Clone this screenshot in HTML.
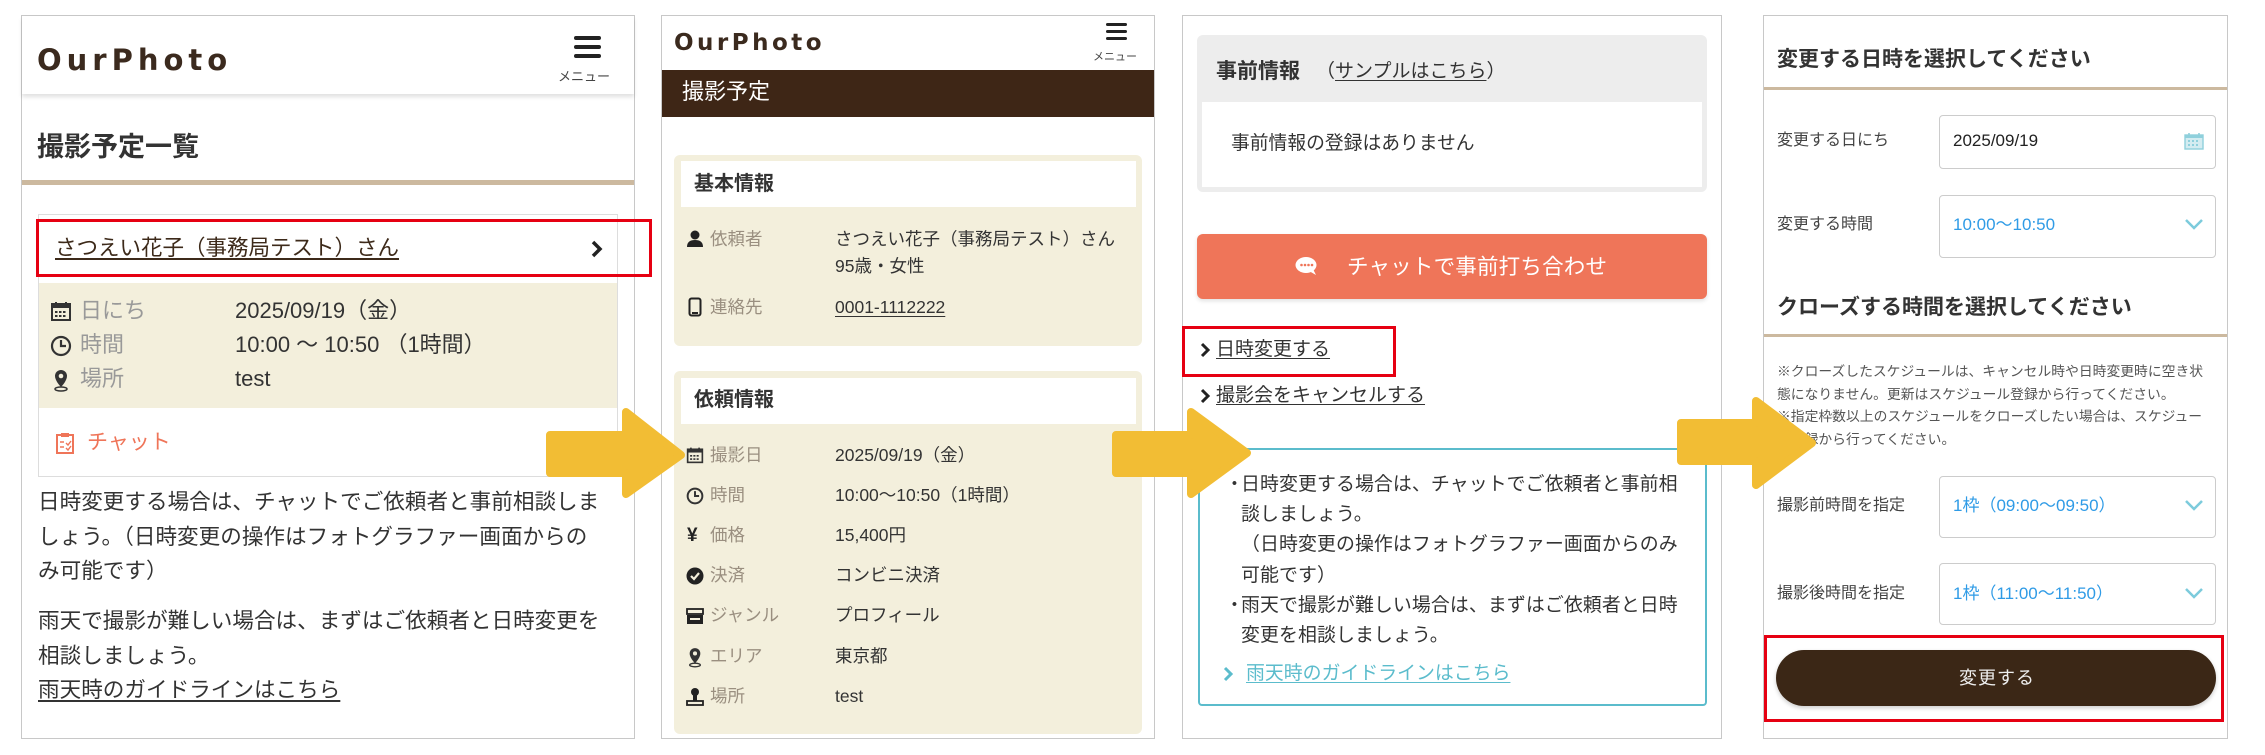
<!DOCTYPE html>
<html><head><meta charset="utf-8">
<style>
*{margin:0;padding:0;box-sizing:border-box}
body{width:2265px;height:755px;background:#fff;position:relative;overflow:hidden;font-family:"Liberation Sans","Noto Sans CJK JP",sans-serif;color:#333}
.a{position:absolute;white-space:nowrap}
.box{position:absolute}
.logo{font-family:"DejaVu Sans","Liberation Sans",sans-serif;font-weight:bold;color:#3b2a1e}
.u{text-decoration:underline;text-underline-offset:3px}
.bar{position:absolute;background:#222;border-radius:2px}
</style></head><body>

<!-- ===== Panel 1 ===== -->
<div class="box" style="left:21px;top:15px;width:614px;height:724px;border:1px solid #c8c8c8"></div>
<div class="box" style="left:22px;top:16px;width:612px;height:78px;background:#fff;box-shadow:0 3px 4px rgba(0,0,0,.12)"></div>
<div class="a logo" style="left:37px;top:42px;font-size:29px;line-height:36px;letter-spacing:5px">OurPhoto</div>
<div class="bar" style="left:574px;top:36px;width:27px;height:4px"></div>
<div class="bar" style="left:574px;top:45px;width:27px;height:4px"></div>
<div class="bar" style="left:574px;top:54px;width:27px;height:4px"></div>
<div class="a" style="left:558px;top:69px;font-size:13px;line-height:16px;color:#444">メニュー</div>
<div class="a" style="left:37px;top:131px;font-size:27px;line-height:32px;font-weight:bold;color:#333">撮影予定一覧</div>
<div class="box" style="left:22px;top:180px;width:612px;height:5px;background:#ccb99f"></div>
<div class="box" style="left:38px;top:214px;width:580px;height:263px;border:1px solid #ddd"></div>
<div class="a u" style="left:55px;top:233px;font-size:21.5px;line-height:30px;color:#3d2a1a">さつえい花子（事務局テスト）さん</div>
<svg class="a" style="left:590px;top:240px" width="14" height="18" viewBox="0 0 14 18"><path d="M3 2 L10 9 L3 16" stroke="#222" stroke-width="3.5" fill="none"/></svg>
<div class="box" style="left:36px;top:219px;width:616px;height:58px;border:3px solid #e60012"></div>
<div class="box" style="left:39px;top:283px;width:578px;height:125px;background:#f3efdc"></div>
<svg class="a" style="left:50px;top:300px" width="22" height="22" viewBox="0 0 22 22"><rect x="2" y="4" width="18" height="16" fill="none" stroke="#333" stroke-width="2"/><rect x="2" y="4" width="18" height="4" fill="#333"/><path d="M6 2v4M16 2v4" stroke="#333" stroke-width="2"/><g fill="#333"><rect x="5" y="11" width="2.5" height="2"/><rect x="9" y="11" width="2.5" height="2"/><rect x="13" y="11" width="2.5" height="2"/><rect x="5" y="15" width="2.5" height="2"/><rect x="9" y="15" width="2.5" height="2"/><rect x="13" y="15" width="2.5" height="2"/></g></svg>
<svg class="a" style="left:50px;top:335px" width="22" height="22" viewBox="0 0 22 22"><circle cx="11" cy="11" r="9" fill="none" stroke="#333" stroke-width="2.2"/><path d="M11 5v6h5" stroke="#333" stroke-width="2.2" fill="none"/></svg>
<svg class="a" style="left:52px;top:368px" width="18" height="24" viewBox="0 0 18 24"><path d="M9 2a6 6 0 0 0-6 6c0 5 6 11 6 11s6-6 6-11a6 6 0 0 0-6-6z" fill="#333"/><circle cx="9" cy="8" r="2.3" fill="#f3efdc"/><ellipse cx="9" cy="21" rx="6" ry="2" fill="none" stroke="#333" stroke-width="1.5"/></svg>
<div class="a" style="left:80px;top:296px;font-size:22px;line-height:30px;color:#999">日にち</div>
<div class="a" style="left:80px;top:330px;font-size:22px;line-height:30px;color:#999">時間</div>
<div class="a" style="left:80px;top:364px;font-size:22px;line-height:30px;color:#999">場所</div>
<div class="a" style="left:235px;top:296px;font-size:22px;line-height:30px;color:#333">2025/09/19（金）</div>
<div class="a" style="left:235px;top:330px;font-size:22px;line-height:30px;color:#333">10:00 〜 10:50 （1時間）</div>
<div class="a" style="left:235px;top:364px;font-size:22px;line-height:30px;color:#333">test</div>
<svg class="a" style="left:55px;top:432px" width="20" height="23" viewBox="0 0 20 23"><rect x="2" y="3" width="16" height="18" fill="none" stroke="#ef7559" stroke-width="2"/><rect x="6" y="1" width="8" height="4" fill="#ef7559"/><path d="M5 10h4M5 15h4M11 11l2 2 3-4M11 16l2 2 3-4" stroke="#ef7559" stroke-width="1.4" fill="none"/></svg>
<div class="a" style="left:87px;top:428px;font-size:21px;line-height:30px;color:#ef7559;letter-spacing:0px">チャット</div>
<div class="a" style="left:38px;top:485px;font-size:21.6px;line-height:34.5px;color:#333">日時変更する場合は、チャットでご依頼者と事前相談しま<br>しょう。（日時変更の操作はフォトグラファー画面からの<br>み可能です）</div>
<div class="a" style="left:38px;top:604px;font-size:21.6px;line-height:34.5px;color:#333">雨天で撮影が難しい場合は、まずはご依頼者と日時変更を<br>相談しましょう。<br><span class="u" style="color:#333">雨天時のガイドラインはこちら</span></div>

<!-- ===== Panel 2 ===== -->
<div class="box" style="left:661px;top:15px;width:494px;height:724px;border:1px solid #c8c8c8"></div>
<div class="a logo" style="left:674px;top:29px;font-size:23px;line-height:28px;letter-spacing:3.5px">OurPhoto</div>
<div class="bar" style="left:1106px;top:23px;width:21px;height:3px"></div>
<div class="bar" style="left:1106px;top:30px;width:21px;height:3px"></div>
<div class="bar" style="left:1106px;top:37px;width:21px;height:3px"></div>
<div class="a" style="left:1093px;top:50px;font-size:11px;line-height:14px;color:#444">メニュー</div>
<div class="box" style="left:662px;top:70px;width:492px;height:47px;background:#3e2616"></div>
<div class="a" style="left:682px;top:78px;font-size:22px;line-height:28px;color:#fff">撮影予定</div>

<div class="box" style="left:674px;top:155px;width:468px;height:191px;background:#f3efdc;border-radius:6px"></div>
<div class="box" style="left:681px;top:161px;width:455px;height:46px;background:#fff"></div>
<div class="a" style="left:694px;top:171px;font-size:20px;line-height:26px;font-weight:bold;color:#333">基本情報</div>
<div class="box" style="left:674px;top:371px;width:468px;height:363px;background:#f3efdc;border-radius:6px"></div>
<div class="box" style="left:681px;top:378px;width:455px;height:46px;background:#fff"></div>
<div class="a" style="left:694px;top:387px;font-size:20px;line-height:26px;font-weight:bold;color:#333">依頼情報</div>

<div style="position:absolute;left:0;top:0;font-size:17.5px;color:#9a8f80">
<div class="a" style="left:710px;top:226px;line-height:26px">依頼者</div>
<div class="a" style="left:710px;top:294px;line-height:26px">連絡先</div>
<div class="a" style="left:710px;top:442px;line-height:26px">撮影日</div>
<div class="a" style="left:710px;top:482px;line-height:26px">時間</div>
<div class="a" style="left:710px;top:522px;line-height:26px">価格</div>
<div class="a" style="left:710px;top:562px;line-height:26px">決済</div>
<div class="a" style="left:710px;top:602px;line-height:26px">ジャンル</div>
<div class="a" style="left:710px;top:643px;line-height:26px">エリア</div>
<div class="a" style="left:710px;top:683px;line-height:26px">場所</div>
</div>
<div style="position:absolute;left:0;top:0;font-size:17.5px;color:#333">
<div class="a" style="left:835px;top:226px;line-height:26px">さつえい花子（事務局テスト）さん</div>
<div class="a" style="left:835px;top:253px;line-height:26px">95歳・女性</div>
<div class="a u" style="left:835px;top:294px;line-height:26px">0001-1112222</div>
<div class="a" style="left:835px;top:442px;line-height:26px">2025/09/19（金）</div>
<div class="a" style="left:835px;top:482px;line-height:26px">10:00〜10:50（1時間）</div>
<div class="a" style="left:835px;top:522px;line-height:26px">15,400円</div>
<div class="a" style="left:835px;top:562px;line-height:26px">コンビニ決済</div>
<div class="a" style="left:835px;top:602px;line-height:26px">プロフィール</div>
<div class="a" style="left:835px;top:643px;line-height:26px">東京都</div>
<div class="a" style="left:835px;top:683px;line-height:26px">test</div>
</div>
<!-- icons panel 2 -->
<svg class="a" style="left:686px;top:230px" width="18" height="18" viewBox="0 0 18 18"><circle cx="9" cy="5" r="4.5" fill="#222"/><path d="M1 17c0-5 3-7 8-7s8 2 8 7z" fill="#222"/></svg>
<svg class="a" style="left:688px;top:297px" width="14" height="20" viewBox="0 0 14 20"><rect x="1.5" y="1.5" width="11" height="17" rx="2" fill="none" stroke="#222" stroke-width="2"/><rect x="4" y="15" width="6" height="2" fill="#222"/></svg>
<svg class="a" style="left:686px;top:446px" width="18" height="18" viewBox="0 0 22 22"><rect x="2" y="4" width="18" height="16" fill="none" stroke="#333" stroke-width="2"/><rect x="2" y="4" width="18" height="4" fill="#333"/><path d="M6 2v4M16 2v4" stroke="#333" stroke-width="2"/><g fill="#333"><rect x="5" y="11" width="2.5" height="2"/><rect x="9" y="11" width="2.5" height="2"/><rect x="13" y="11" width="2.5" height="2"/><rect x="5" y="15" width="2.5" height="2"/><rect x="9" y="15" width="2.5" height="2"/><rect x="13" y="15" width="2.5" height="2"/></g></svg>
<svg class="a" style="left:686px;top:487px" width="18" height="18" viewBox="0 0 22 22"><circle cx="11" cy="11" r="9" fill="none" stroke="#333" stroke-width="2.4"/><path d="M11 5v6h5" stroke="#333" stroke-width="2.4" fill="none"/></svg>
<div class="a" style="left:687px;top:523px;font-size:19px;line-height:26px;font-weight:bold;color:#222">¥</div>
<svg class="a" style="left:686px;top:567px" width="18" height="18" viewBox="0 0 18 18"><circle cx="9" cy="9" r="8.5" fill="#222"/><path d="M5 9l3 3 5-6" stroke="#f3efdc" stroke-width="2.2" fill="none"/></svg>
<svg class="a" style="left:686px;top:607px" width="18" height="18" viewBox="0 0 18 18"><rect x="1" y="2" width="16" height="5" fill="none" stroke="#222" stroke-width="1.8"/><rect x="1" y="8" width="16" height="9" fill="#222"/><rect x="4" y="11" width="10" height="2" fill="#f3efdc"/></svg>
<svg class="a" style="left:687px;top:646px" width="16" height="22" viewBox="0 0 18 24"><path d="M9 2a6 6 0 0 0-6 6c0 5 6 11 6 11s6-6 6-11a6 6 0 0 0-6-6z" fill="#333"/><circle cx="9" cy="8" r="2.3" fill="#f3efdc"/><ellipse cx="9" cy="21" rx="6" ry="2" fill="none" stroke="#333" stroke-width="1.5"/></svg>
<svg class="a" style="left:686px;top:687px" width="18" height="20" viewBox="0 0 18 20"><circle cx="9" cy="5" r="4" fill="#222"/><rect x="7" y="8" width="4" height="6" fill="#222"/><rect x="1" y="14" width="16" height="4" fill="none" stroke="#222" stroke-width="1.8"/></svg>

<!-- ===== Panel 3 ===== -->
<div class="box" style="left:1182px;top:15px;width:540px;height:724px;border:1px solid #c8c8c8"></div>
<div class="box" style="left:1197px;top:35px;width:510px;height:157px;background:#ededed;border-radius:6px"></div>
<div class="box" style="left:1202px;top:102px;width:500px;height:85px;background:#fff"></div>
<div class="a" style="left:1216px;top:58px;font-size:21px;line-height:28px;font-weight:bold;color:#333">事前情報</div>
<div class="a" style="left:1316px;top:58px;font-size:19px;line-height:28px;color:#333">（<span class="u">サンプルはこちら</span>）</div>
<div class="a" style="left:1231px;top:130px;font-size:18.8px;line-height:26px;color:#333">事前情報の登録はありません</div>
<div class="box" style="left:1197px;top:234px;width:510px;height:65px;background:#ef7559;border-radius:6px;box-shadow:0 2px 4px rgba(0,0,0,.12)"></div>
<svg class="a" style="left:1295px;top:256px" width="23" height="20" viewBox="0 0 23 20"><ellipse cx="11" cy="9" rx="10.5" ry="8" fill="#fff"/><path d="M14 15l7 4-3-6z" fill="#fff"/><g fill="#ef7559"><circle cx="6.5" cy="9" r="1.3"/><circle cx="10" cy="9" r="1.3"/><circle cx="13.5" cy="9" r="1.3"/><circle cx="17" cy="9" r="1.3"/></g></svg>
<div class="a" style="left:1347px;top:252px;font-size:21.5px;line-height:30px;color:#fff;letter-spacing:0.2px">チャットで事前打ち合わせ</div>
<svg class="a" style="left:1200px;top:342px" width="12" height="16" viewBox="0 0 12 16"><path d="M2 2l6 6-6 6" stroke="#222" stroke-width="3" fill="none"/></svg>
<div class="a u" style="left:1216px;top:337px;font-size:19px;line-height:26px;color:#333">日時変更する</div>
<div class="box" style="left:1182px;top:326px;width:214px;height:51px;border:3px solid #e60012"></div>
<svg class="a" style="left:1200px;top:388px" width="12" height="16" viewBox="0 0 12 16"><path d="M2 2l6 6-6 6" stroke="#222" stroke-width="3" fill="none"/></svg>
<div class="a u" style="left:1216px;top:383px;font-size:19px;line-height:26px;color:#333">撮影会をキャンセルする</div>
<div class="box" style="left:1198px;top:448px;width:509px;height:258px;border:2.5px solid #5bbccc;border-radius:4px"></div>
<div class="a" style="left:1225px;top:470px;font-size:18.9px;line-height:30.2px;color:#333">・</div>
<div class="a" style="left:1225px;top:591px;font-size:18.9px;line-height:30.2px;color:#333">・</div>
<div class="a" style="left:1241px;top:470px;font-size:18.9px;line-height:30.2px;color:#333;letter-spacing:0.1px">日時変更する場合は、チャットでご依頼者と事前相<br>談しましょう。<br>（日時変更の操作はフォトグラファー画面からのみ<br>可能です）<br>雨天で撮影が難しい場合は、まずはご依頼者と日時<br>変更を相談しましょう。</div>
<svg class="a" style="left:1223px;top:666px" width="12" height="16" viewBox="0 0 12 16"><path d="M2 2l6 6-6 6" stroke="#5bbccc" stroke-width="3" fill="none"/></svg>
<div class="a u" style="left:1246px;top:661px;font-size:18.9px;line-height:26px;color:#5bbccc">雨天時のガイドラインはこちら</div>

<!-- ===== Panel 4 ===== -->
<div class="box" style="left:1763px;top:15px;width:465px;height:724px;border:1px solid #c8c8c8"></div>
<div class="a" style="left:1777px;top:46px;font-size:21px;line-height:28px;font-weight:bold;color:#333">変更する日時を選択してください</div>
<div class="box" style="left:1764px;top:87px;width:463px;height:3px;background:#ccb99f"></div>
<div class="a" style="left:1777px;top:130px;font-size:16px;line-height:22px;color:#444">変更する日にち</div>
<div class="box" style="left:1939px;top:115px;width:277px;height:54px;border:1px solid #ccc;border-radius:4px"></div>
<div class="a" style="left:1953px;top:130px;font-size:17px;line-height:22px;color:#222">2025/09/19</div>
<svg class="a" style="left:2184px;top:132px" width="20" height="18" viewBox="0 0 20 18"><rect x="1" y="3" width="18" height="14" fill="#d4ecf1" stroke="#8fd0dc" stroke-width="1.4"/><rect x="1" y="3" width="18" height="3" fill="#8fd0dc"/><path d="M5 1v4M15 1v4" stroke="#8fd0dc" stroke-width="1.6"/><g fill="#8fd0dc"><rect x="4" y="8" width="2" height="2"/><rect x="8" y="8" width="2" height="2"/><rect x="12" y="8" width="2" height="2"/><rect x="4" y="12" width="2" height="2"/><rect x="8" y="12" width="2" height="2"/><rect x="12" y="12" width="2" height="2"/></g></svg>
<div class="a" style="left:1777px;top:214px;font-size:16px;line-height:22px;color:#444">変更する時間</div>
<div class="box" style="left:1939px;top:195px;width:277px;height:63px;border:1px solid #ccc;border-radius:4px"></div>
<div class="a" style="left:1953px;top:214px;font-size:17px;line-height:22px;color:#2f9be6">10:00〜10:50</div>
<svg class="a" style="left:2185px;top:219px" width="18" height="11" viewBox="0 0 18 11"><path d="M1 1l8 8 8-8" stroke="#7ccbdc" stroke-width="2.5" fill="none"/></svg>
<div class="a" style="left:1777px;top:294px;font-size:21px;line-height:28px;font-weight:bold;color:#333">クローズする時間を選択してください</div>
<div class="box" style="left:1764px;top:334px;width:463px;height:3px;background:#ccb99f"></div>
<div class="a" style="left:1777px;top:361px;font-size:13.8px;line-height:22.6px;color:#555">※クローズしたスケジュールは、キャンセル時や日時変更時に空き状<br>態になりません。更新はスケジュール登録から行ってください。<br>※指定枠数以上のスケジュールをクローズしたい場合は、スケジュー<br>ル登録から行ってください。</div>
<div class="a" style="left:1777px;top:495px;font-size:16px;line-height:22px;color:#444">撮影前時間を指定</div>
<div class="box" style="left:1939px;top:476px;width:277px;height:62px;border:1px solid #ccc;border-radius:4px"></div>
<div class="a" style="left:1953px;top:495px;font-size:17px;line-height:22px;color:#2f9be6">1枠（09:00〜09:50）</div>
<svg class="a" style="left:2185px;top:500px" width="18" height="11" viewBox="0 0 18 11"><path d="M1 1l8 8 8-8" stroke="#7ccbdc" stroke-width="2.5" fill="none"/></svg>
<div class="a" style="left:1777px;top:583px;font-size:16px;line-height:22px;color:#444">撮影後時間を指定</div>
<div class="box" style="left:1939px;top:563px;width:277px;height:62px;border:1px solid #ccc;border-radius:4px"></div>
<div class="a" style="left:1953px;top:583px;font-size:17px;line-height:22px;color:#2f9be6">1枠（11:00〜11:50）</div>
<svg class="a" style="left:2185px;top:588px" width="18" height="11" viewBox="0 0 18 11"><path d="M1 1l8 8 8-8" stroke="#7ccbdc" stroke-width="2.5" fill="none"/></svg>
<div class="box" style="left:1776px;top:650px;width:440px;height:56px;background:#3b2716;border-radius:28px;box-shadow:0 2px 4px rgba(0,0,0,.2)"></div>
<div class="a" style="left:1959px;top:665px;font-size:18px;line-height:26px;color:#eee;letter-spacing:1px">変更する</div>
<div class="box" style="left:1764px;top:635px;width:460px;height:87px;border:3px solid #e60012"></div>

<!-- arrows -->
<svg class="a" style="left:0;top:0" width="2265" height="755" viewBox="0 0 2265 755">
<g fill="#f2bd34" stroke="#f2bd34" stroke-width="8" stroke-linejoin="round">
<polygon points="550,435 626,435 626,412 681,455 626,494 626,473 550,473"/>
<polygon points="1116,435 1191,435 1191,412 1247,453 1191,494 1191,473 1116,473"/>
<polygon points="1681,423 1756,423 1756,401 1812,443 1756,485 1756,461 1681,461"/>
</g>
</svg>
</body></html>
